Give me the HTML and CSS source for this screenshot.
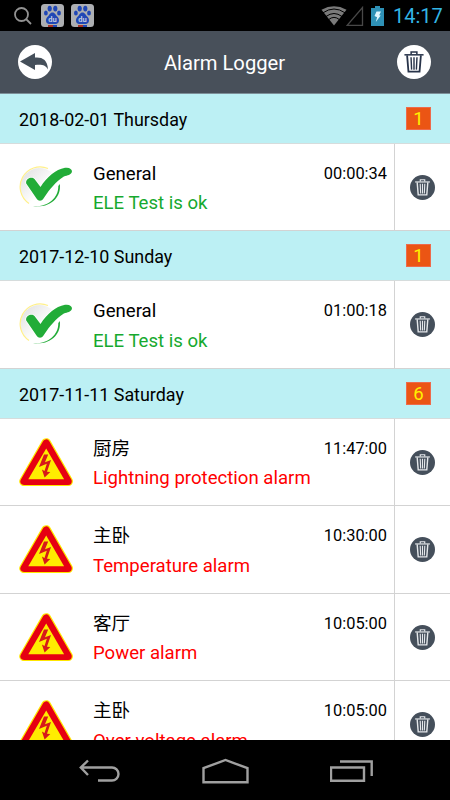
FILE: index.html
```html
<!DOCTYPE html>
<html lang="en">
<head>
<meta charset="utf-8">
<title>Alarm Logger</title>
<link rel="stylesheet" href="styles.css">
</head>
<body>
<svg class="defs" width="0" height="0" aria-hidden="true">
  <defs>
    <linearGradient id="disc" x1="0" y1="0" x2="1" y2="1"><stop offset="0" stop-color="#dedede"/><stop offset=".6" stop-color="#fff"/></linearGradient>
    <symbol id="bin" viewBox="0 0 20 23">
      <g fill="none" stroke="currentColor">
        <path d="M0 4h20" stroke-width="1.6"/>
        <path d="M7 3.500V1h6v2.500" stroke-width="1.600"/>
        <path d="M2.800 4.500l1.400 17h11.600l1.400-17" stroke-width="1.900"/>
        <path d="M6.900 6.500l.6 13M10 6.500v13M13.100 6.500l-.6 13" stroke-width="1.500"/>
      </g>
    </symbol>
    <symbol id="warning" viewBox="0 0 54 49">
      <path d="M27.200 5L5 43.300h44.200z" fill="#ffe600" stroke="#ffe600" stroke-width="9.600" stroke-linejoin="round"/>
      <path d="M27.200 5L5 43.300h44.200z" fill="#e60012" stroke="#e60012" stroke-width="7.200" stroke-linejoin="round"/>
      <path d="M27.200 10.500L9.300 41.200h35.800z" fill="#ffec00"/>
      <path d="M25 16.500h4.200l-3.200 7.800 6-2.200-4 11.600 3.300.2-5.700 5.600-2.700-7.900 2.600 1.400 2.300-7.200-7.800 3.200z" fill="#d71919"/>
    </symbol>
    <symbol id="check" viewBox="0 0 54 43">
      <circle cx="20.500" cy="21" r="19" fill="url(#disc)"/>
      <path d="M10 37.500A20 20 0 0 1 29 2.500" fill="none" stroke="#fff08a" stroke-width="1.200"/>
      <path d="M40.800 18C42.500 30 33 42.200 14 40.300 29 41.200 39.500 32 39.300 20z" fill="#22ac38"/>
      <path d="M7.200 17.500C6.200 13 12.500 10 15.500 13L21.500 21C28 11 36.500 3.500 46 1.800 52 .8 54.500 5 52 7.500 49.500 10.200 46 9 42 12.500 34 18.500 28.500 26.500 24.500 32.500 22.500 35.500 19.500 35.500 17.500 32.500z" fill="#22ac38" stroke="#fff" stroke-width="1.400" paint-order="stroke"/>
    </symbol>
    <symbol id="paw" viewBox="0 0 23 23">
      <rect width="23" height="23" rx="3.500" fill="#adafb2"/>
      <g fill="#2047b5">
        <ellipse cx="8.700" cy="4.600" rx="2.100" ry="2.900"/><ellipse cx="14.300" cy="4.600" rx="2.100" ry="2.900"/>
        <ellipse cx="4.900" cy="9" rx="1.900" ry="2.500"/><ellipse cx="18" cy="9" rx="1.900" ry="2.500"/>
        <path d="M11.500 8.500c2.500 0 3.200 2.800 5 4.300 2.200 2 2.300 7.200-1.800 7.200H8.300c-4.100 0-4-5.200-1.800-7.200 1.800-1.500 2.500-4.300 5-4.300z"/>
      </g>
      <path d="M7 21h5v2H7z" fill="#a83227"/><path d="M12 21h4v2h-4z" fill="#2047b5"/>
      <text x="11.500" y="18.300" text-anchor="middle" class="paw-text">du</text>
    </symbol>
  </defs>
</svg>

<div class="screen">
  <div class="status">
    <svg class="search" viewBox="0 0 18 18"><circle cx="7.500" cy="7.500" r="6.500"/><path d="M12 12l5 5"/></svg>
    <svg class="paw"><use href="#paw"/></svg>
    <svg class="paw"><use href="#paw"/></svg>
    <svg class="wifi" viewBox="0 0 26 20"><path d="M13 19.500L.5 3.700Q13-3 25.500 3.700z" fill="#7a7a7a"/><path d="M2 6.800Q13-.8 24 6.800M5 10.500Q13 4.500 21 10.500M7.500 13.700Q13 9 18.500 13.700" fill="none" stroke="#000" stroke-width="1"/></svg>
    <svg class="signal" viewBox="0 0 18 20"><path d="M16.500 1.500v17.800H1.200z" fill="none" stroke="#484848" stroke-width="1.300"/></svg>
    <svg class="battery" viewBox="0 0 13 20"><path d="M4 0h5v2h4v18H0V2h4z" fill="#2e91b6"/><path d="M5.500 5.500H10L8.200 9.200l1.500.3L4.800 16l1.300-4.800L3.500 10z" fill="#dff6ff"/></svg>
    <span class="clock">14:17</span>
  </div>
  <header class="header">
    <div class="round">
      <svg class="back" viewBox="0 0 28 17"><path d="M0 8.500L15 0v4.600C22 4 27.500 6.500 28 16.500c-2.500-4.200-5.500-5.300-13-4.500V17z" fill="#454f5a"/></svg>
    </div>
    <h1 class="title">Alarm Logger</h1>
    <div class="round"><svg class="bin-large"><use href="#bin"/></svg></div>
  </header>
  <main class="log">
    <div class="day"><span class="date">2018-02-01 Thursday</span><span class="count">1</span></div>
    <div class="row">
      <svg class="icon-check"><use href="#check"/></svg>
      <div class="info"><div class="name">General</div><div class="message ok">ELE Test is ok</div></div>
      <time class="time">00:00:34</time>
      <div class="action"><span class="delete"><svg class="bin-small"><use href="#bin"/></svg></span></div>
    </div>
    <div class="day"><span class="date">2017-12-10 Sunday</span><span class="count">1</span></div>
    <div class="row">
      <svg class="icon-check"><use href="#check"/></svg>
      <div class="info"><div class="name">General</div><div class="message ok">ELE Test is ok</div></div>
      <time class="time">01:00:18</time>
      <div class="action"><span class="delete"><svg class="bin-small"><use href="#bin"/></svg></span></div>
    </div>
    <div class="day"><span class="date">2017-11-11 Saturday</span><span class="count">6</span></div>
    <div class="row">
      <svg class="icon-warning"><use href="#warning"/></svg>
      <div class="info"><div class="name" lang="zh">厨房</div><div class="message">Lightning protection alarm</div></div>
      <time class="time">11:47:00</time>
      <div class="action"><span class="delete"><svg class="bin-small"><use href="#bin"/></svg></span></div>
    </div>
    <div class="row">
      <svg class="icon-warning"><use href="#warning"/></svg>
      <div class="info"><div class="name" lang="zh">主卧</div><div class="message">Temperature alarm</div></div>
      <time class="time">10:30:00</time>
      <div class="action"><span class="delete"><svg class="bin-small"><use href="#bin"/></svg></span></div>
    </div>
    <div class="row">
      <svg class="icon-warning"><use href="#warning"/></svg>
      <div class="info"><div class="name" lang="zh">客厅</div><div class="message">Power alarm</div></div>
      <time class="time">10:05:00</time>
      <div class="action"><span class="delete"><svg class="bin-small"><use href="#bin"/></svg></span></div>
    </div>
    <div class="row">
      <svg class="icon-warning"><use href="#warning"/></svg>
      <div class="info"><div class="name" lang="zh">主卧</div><div class="message">Over voltage alarm</div></div>
      <time class="time">10:05:00</time>
      <div class="action"><span class="delete"><svg class="bin-small"><use href="#bin"/></svg></span></div>
    </div>
  </main>
  <nav class="nav">
    <svg class="nav-back" viewBox="0 0 42 24"><path d="M19 21.500h14a6.500 6.500 0 0 0 0-13H2M9 1.500L1.800 8.500 9 16"/></svg>
    <svg class="nav-home" viewBox="0 0 47 26"><path d="M1.500 24.300V10.200L23.500 2l22 8.200v14.100z"/></svg>
    <svg class="nav-recent" viewBox="0 0 43 22"><path d="M1 7.500h33v13.300H1zM10 1.500h31.700V16"/></svg>
  </nav>
</div>
</body>
</html>
```
FILE: styles.css
```css
* { box-sizing: border-box; }
body { margin: 0; background: #000; font-family: Roboto, "Noto Sans CJK SC", sans-serif; color: #000; }
svg { display: block; flex: none; }
.defs { position: absolute; }
.screen { width: 450px; height: 800px; display: flex; flex-direction: column; overflow: hidden; }

.status { height: 31px; flex: none; display: flex; align-items: center; padding: 0 7px 0 14px; background: #000; }
.search { width: 18px; height: 18px; fill: none; stroke: #929292; stroke-width: 1.8; }
.paw { width: 23px; height: 23px; margin-left: 9px; }
.paw + .paw { margin-left: 7px; }
.paw-text { font: bold 7.5px Roboto, sans-serif; fill: #c3cbe2; }
.wifi { width: 26px; height: 20px; margin-left: auto; }
.signal { width: 18px; height: 20px; margin-left: -1px; }
.battery { width: 13px; height: 20px; margin-left: 7px; }
.clock { width: 50px; margin-left: 9px; padding-top: 2px; font-size: 20px; line-height: 29px; color: #33b5e5; white-space: nowrap; }

.header { height: 62.9px; flex: none; display: flex; align-items: center; justify-content: space-between; padding: 0 19px 0 18px; background: #48505a; border-bottom: 1px solid #7d8f98; }
.round { width: 34px; height: 34px; border-radius: 50%; background: #fff; display: flex; align-items: center; justify-content: center; }
.back { width: 28px; height: 17px; margin-left: -2px; }
.title { margin: 0; padding-top: 2px; font-size: 20.200px; font-weight: 400; line-height: 24px; color: #fff; }
.bin-large { width: 20px; height: 22px; color: #28344a; }

.log { flex: 1; min-height: 0; overflow: hidden; background: #fff; }
.day { height: 50px; display: flex; align-items: center; justify-content: space-between; padding: 0 19px; background: #bcf0f4; border-bottom: 1px solid #d6dcdc; }
.date { padding-top: 3px; font-size: 17.900px; line-height: 24px; }
.count { width: 25px; height: 23px; background: #eb5514; border: 1px solid #ee6a4a; font-size: 18.500px; line-height: 23px; text-align: center; color: #fff100; }
.row { height: 87.5px; display: flex; align-items: center; padding-left: 19px; border-bottom: 1px solid #d3d3d3; }
.icon-check { width: 54px; height: 43px; }
.icon-warning { width: 54px; height: 49px; }
.info { flex: 1; margin-left: 20px; padding-top: 4px; }
.name, .message { font-size: 18.600px; line-height: 29.500px; white-space: nowrap; }
.message { color: #f00; }
.message.ok { color: #16a92e; }
.time { align-self: flex-start; margin: 18px 7px 0 -100px; font-size: 16.400px; line-height: 24px; }
.action { align-self: stretch; width: 56px; border-left: 1px solid #d3d3d3; display: flex; align-items: center; justify-content: center; padding-right: 1px; }
.delete { width: 25px; height: 25px; border-radius: 50%; background: #454f5b; display: flex; align-items: center; justify-content: center; }
.bin-small { width: 15px; height: 17px; color: #e5e8eb; }

.nav { height: 60px; flex: none; display: flex; background: #000; padding: 2px 77px 0 79px; align-items: center; justify-content: space-between; }
.nav svg { fill: none; stroke: #a0a0a0; stroke-width: 2.400; }
.nav-back { width: 42px; height: 24px; }
.nav-home { width: 47px; height: 26px; }
.nav-recent { width: 43px; height: 22px; }
```
